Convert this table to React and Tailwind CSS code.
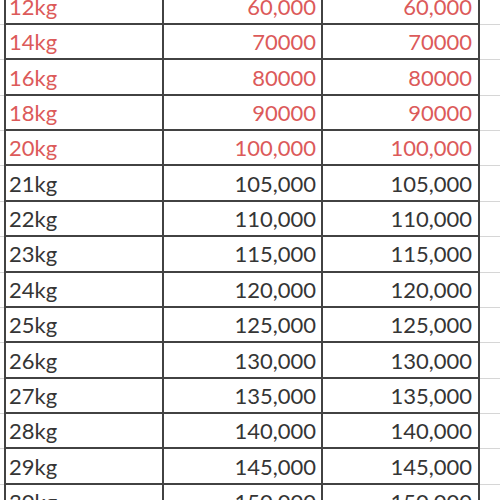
const rows = [
  ["12kg", "60,000", "60,000", true],
  ["14kg", "70000", "70000", true],
  ["16kg", "80000", "80000", true],
  ["18kg", "90000", "90000", true],
  ["20kg", "100,000", "100,000", true],
  ["21kg", "105,000", "105,000", false],
  ["22kg", "110,000", "110,000", false],
  ["23kg", "115,000", "115,000", false],
  ["24kg", "120,000", "120,000", false],
  ["25kg", "125,000", "125,000", false],
  ["26kg", "130,000", "130,000", false],
  ["27kg", "135,000", "135,000", false],
  ["28kg", "140,000", "140,000", false],
  ["29kg", "145,000", "145,000", false],
  ["30kg", "150,000", "150,000", false],
];

const Row = ({ weight, price, total, red }) => {
  const text = red ? "text-[#dc5a5a]" : "text-[#353535]";
  return (
    <div className={`flex h-[35.38px] shrink-0 ${text}`}>
      <div className="w-[4px] border-b border-[#d6d6d6]" />
      <div className="w-[160px] flex items-center pt-[1px] pl-[3px] border-l-2 border-r-2 border-b-2 border-[#424242]">
        {weight}
      </div>
      <div className="w-[159px] flex items-center justify-end pt-[1px] pr-[5px] border-r-2 border-b-2 border-[#424242]">
        {price}
      </div>
      <div className="w-[157px] flex items-center justify-end pt-[1px] pr-[6px] border-r-2 border-b-2 border-[#424242]">
        {total}
      </div>
      <div className="flex-1 border-b border-[#d6d6d6]" />
    </div>
  );
}

export default function App() {
  return (
    <div className="w-[500px] h-[500px] overflow-hidden bg-white font-['Lato',sans-serif] text-[22px] leading-[22px]">
      <div className="flex flex-col -mt-[10.4px]">
        {rows.map(([weight, price, total, red]) => (
          <Row key={weight} weight={weight} price={price} total={total} red={red} />
        ))}
      </div>
    </div>
  );
}
